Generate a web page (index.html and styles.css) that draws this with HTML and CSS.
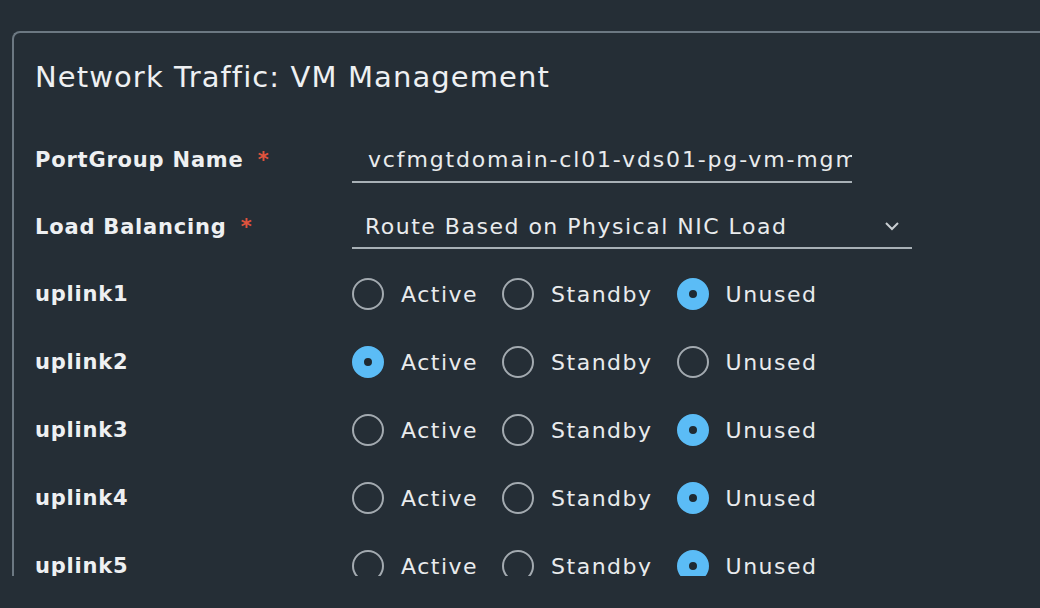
FILE: index.html
```html
<!DOCTYPE html>
<html lang="en">
<head>
<meta charset="utf-8">
<title>Network Traffic: VM Management</title>
<link rel="stylesheet" href="styles.css">
</head>
<body>
<div class="viewport">
  <section class="card">
    <h2 class="card-title">Network Traffic: VM Management</h2>
    <div class="form">
      <div class="row">
        <label class="label">PortGroup Name <span class="req">*</span></label>
        <div class="control"><div class="input">vcfmgtdomain-cl01-vds01-pg-vm-mgmt</div></div>
      </div>
      <div class="row row-lb">
        <label class="label">Load Balancing <span class="req">*</span></label>
        <div class="control">
          <div class="select"><span>Route Based on Physical NIC Load</span>
            <svg class="chev" width="16" height="10" viewBox="0 0 16 10"><path d="M2 2 L8 8 L14 2" fill="none" stroke="#c9ced2" stroke-width="2"/></svg>
          </div>
        </div>
      </div>
      <div class="row">
        <span class="label">uplink1</span>
        <div class="radios">
          <span class="radio"><i class="dot"></i>Active</span>
          <span class="radio"><i class="dot"></i>Standby</span>
          <span class="radio"><i class="dot on"></i>Unused</span>
        </div>
      </div>
      <div class="row">
        <span class="label">uplink2</span>
        <div class="radios">
          <span class="radio"><i class="dot on"></i>Active</span>
          <span class="radio"><i class="dot"></i>Standby</span>
          <span class="radio"><i class="dot"></i>Unused</span>
        </div>
      </div>
      <div class="row">
        <span class="label">uplink3</span>
        <div class="radios">
          <span class="radio"><i class="dot"></i>Active</span>
          <span class="radio"><i class="dot"></i>Standby</span>
          <span class="radio"><i class="dot on"></i>Unused</span>
        </div>
      </div>
      <div class="row">
        <span class="label">uplink4</span>
        <div class="radios">
          <span class="radio"><i class="dot"></i>Active</span>
          <span class="radio"><i class="dot"></i>Standby</span>
          <span class="radio"><i class="dot on"></i>Unused</span>
        </div>
      </div>
      <div class="row">
        <span class="label">uplink5</span>
        <div class="radios">
          <span class="radio"><i class="dot"></i>Active</span>
          <span class="radio"><i class="dot"></i>Standby</span>
          <span class="radio"><i class="dot on"></i>Unused</span>
        </div>
      </div>
    </div>
  </section>
</div>
</body>
</html>
```
FILE: styles.css
```css
html, body {
  margin: 0;
  padding: 0;
  background: #252e36;
  width: 1040px;
  height: 608px;
  overflow: hidden;
  font-family: "DejaVu Sans", "Liberation Sans", sans-serif;
  color: #e9ebed;
}
.viewport {
  height: 576px;
  overflow: hidden;
  padding: 31px 0 0 12px;
  box-sizing: border-box;
}
.card {
  border: 2px solid #6c7882;
  border-right: none;
  border-radius: 8px 0 0 0;
  padding: 0 0 0 21px;
  min-height: 700px;
}
.card-title {
  margin: 0;
  padding-top: 24px;
  height: 68px;
  box-sizing: border-box;
  font-size: 29px;
  font-weight: 400;
  letter-spacing: 1.1px;
  line-height: 40px;
  color: #eef0f2;
}
.form {
  padding-top: 25px;
}
.row {
  display: flex;
  align-items: center;
  height: 68px;
}
.row-lb { height: 66px; }
.label {
  width: 317px;
  flex: none;
  font-size: 21px;
  font-weight: 700;
  letter-spacing: 0.8px;
  color: #eef0f2;
}
.req {
  color: #e0533d;
  margin-left: 6px;
}
.control { flex: none; }
.input {
  width: 500px;
  box-sizing: border-box;
  padding: 0 15px 0 16px;
  height: 44px;
  line-height: 42px;
  border-bottom: 2px solid #a8b0b6;
  font-size: 22px;
  letter-spacing: 1.85px;
  white-space: nowrap;
  overflow: hidden;
  margin-top: 2px;
}
.select {
  width: 560px;
  box-sizing: border-box;
  padding: 0 12px 0 13px;
  height: 44px;
  border-bottom: 2px solid #a8b0b6;
  display: flex;
  align-items: center;
  justify-content: space-between;
  font-size: 22px;
  letter-spacing: 1.5px;
}
.radios {
  display: flex;
  align-items: center;
  gap: 24px;
}
.radio {
  display: flex;
  align-items: center;
  gap: 17px;
  font-size: 22px;
  letter-spacing: 1.5px;
}
.dot {
  width: 32px;
  height: 32px;
  box-sizing: border-box;
  border-radius: 50%;
  border: 2px solid #a3aab0;
  display: block;
}
.dot.on {
  border: 12px solid #5bbcf6;
  background: #1f2a32;
}
```
